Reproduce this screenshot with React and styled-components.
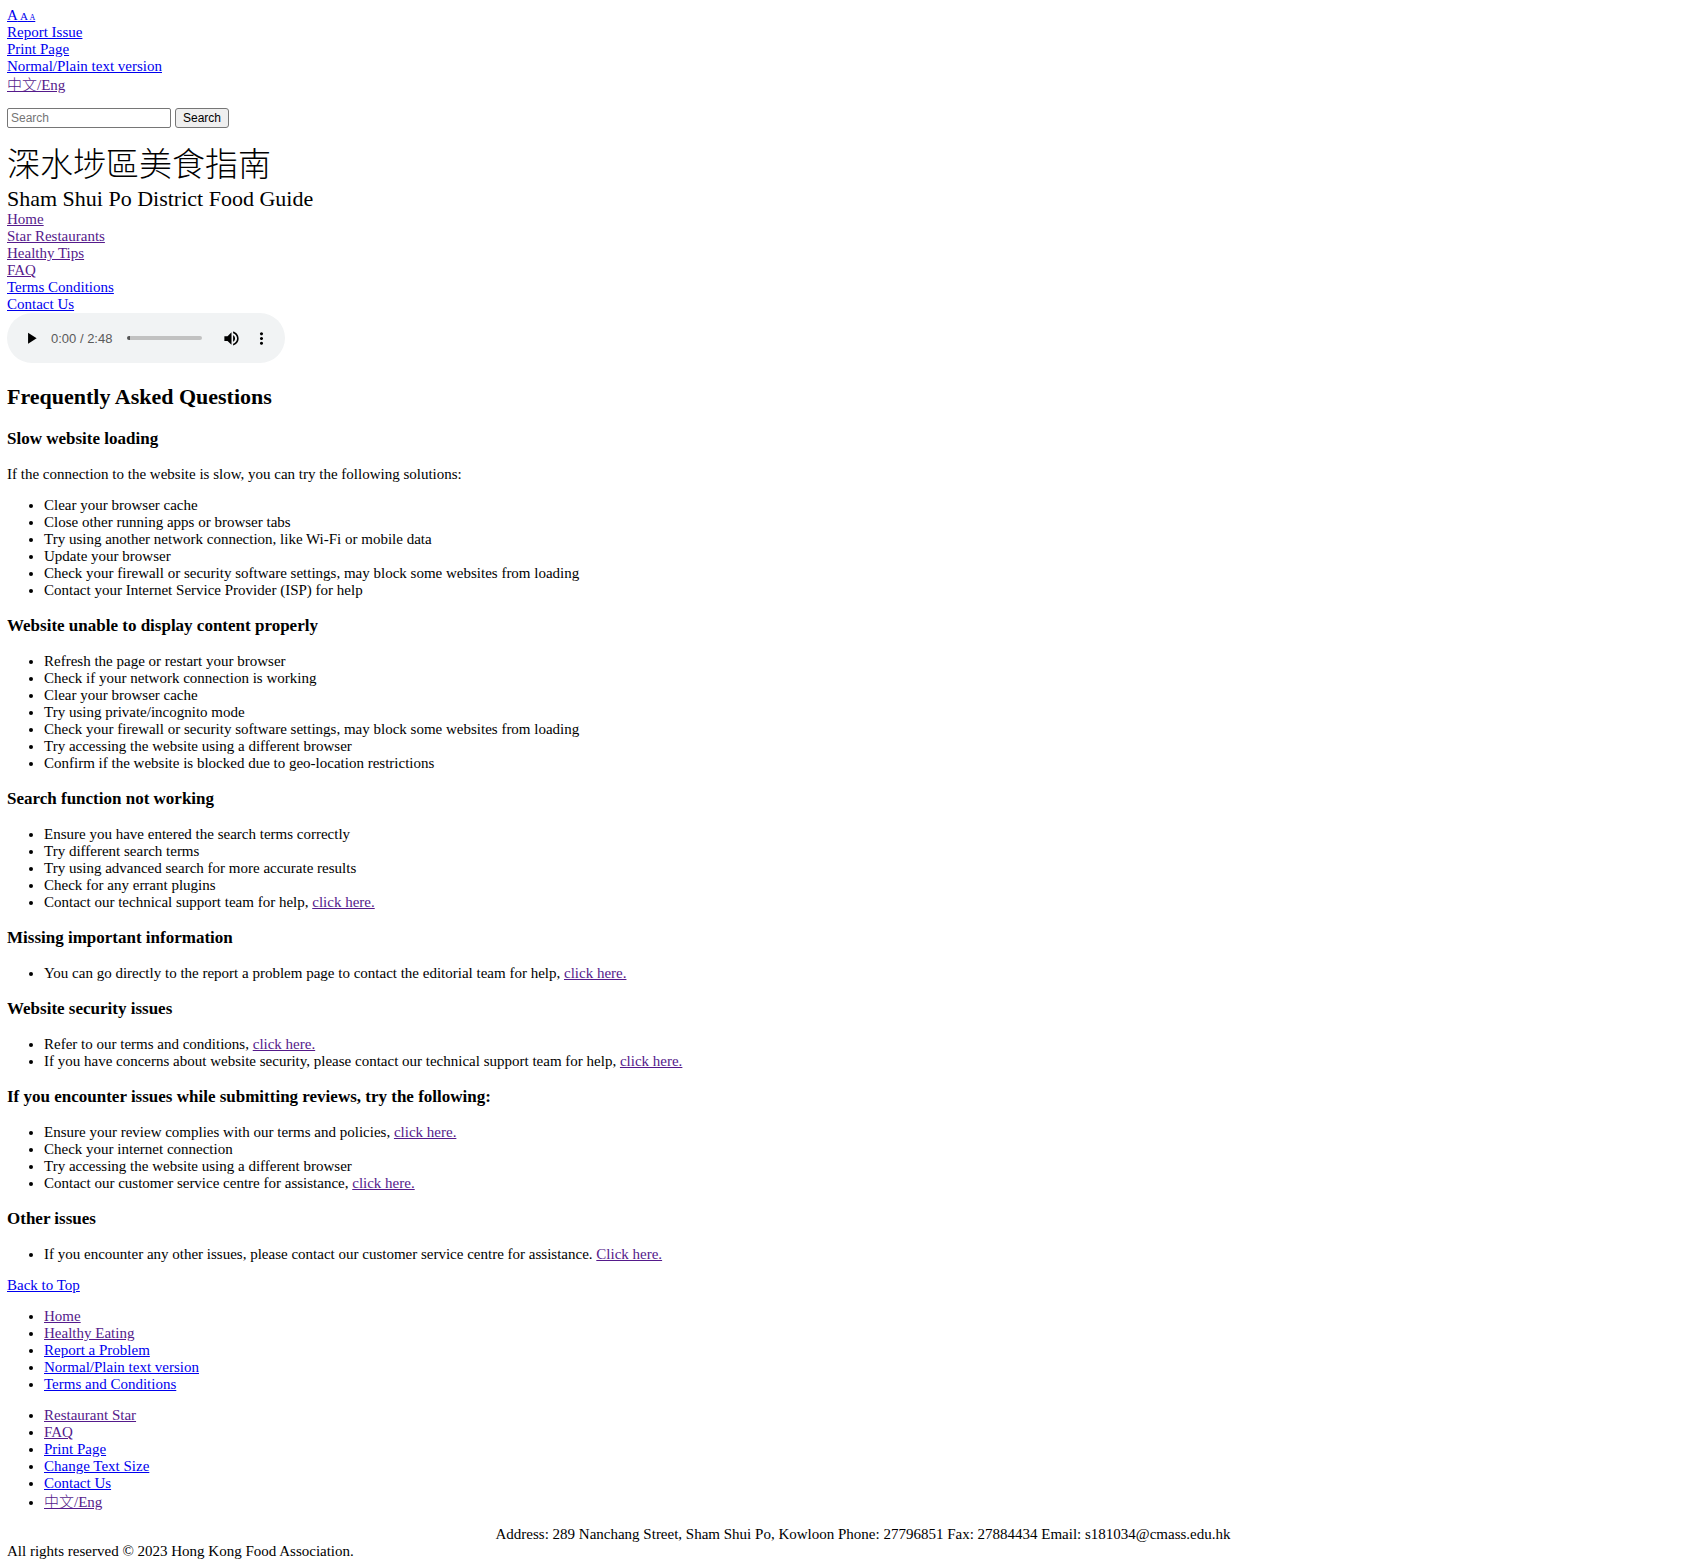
import React, { useState } from "react";
import styled, { createGlobalStyle } from "styled-components";

const serif = `"Liberation Serif", "Noto Sans CJK TC", serif`;
const sans = `"Liberation Sans", Arial, sans-serif`;

const GlobalStyle = createGlobalStyle`
  body {
    margin: 7px;
    background: #fff;
    color: #000;
    font: 15px/17px ${serif};
  }
`;

const Link = styled.a`
  color: ${(p) => (p.$visited ? "#551a8b" : "#0000ee")};
  text-decoration: underline;
`;

const LinkColumn = styled.nav`
  display: flex;
  flex-direction: column;
  align-items: flex-start;
`;

const LanguageLink = styled(Link)`
  display: inline-block;
  line-height: 20px;
  font-weight: 300;
`;

const Letter = styled.span`
  font-size: ${(p) => p.$size}px;
  line-height: 1;
`;

const SearchForm = styled.form`
  display: flex;
  gap: 4px;
  margin: 13px 0 16px;
`;

const SearchInput = styled.input`
  box-sizing: border-box;
  width: 164px;
  height: 20px;
  padding: 1px 3px;
  border: 1px solid #767676;
  border-radius: 2px;
  font: 12px ${sans};
  &::placeholder {
    color: #757575;
  }
`;

const SearchButton = styled.button`
  box-sizing: border-box;
  height: 20px;
  padding: 0 7px;
  border: 1px solid #767676;
  border-radius: 3px;
  background: #efefef;
  color: #000;
  font: 12px ${sans};
`;

const SiteTitle = styled.div`
  font-size: 33px;
  line-height: 42px;
  font-weight: 300;
`;

const SiteSubtitle = styled.div`
  font-size: 22px;
  line-height: 25px;
`;

const Player = styled.div`
  display: flex;
  align-items: center;
  box-sizing: border-box;
  width: 278px;
  height: 50px;
  padding: 0 9px;
  border-radius: 25px;
  background: #f1f3f4;
`;

const IconButton = styled.button`
  display: flex;
  align-items: center;
  justify-content: center;
  width: 30px;
  height: 30px;
  padding: 0;
  border: 0;
  background: none;
  color: #000;
`;

const Time = styled.span`
  flex: 1;
  margin-left: 5px;
  color: #5a5a5a;
  font: 13px/17px ${sans};
  white-space: nowrap;
`;

const Seek = styled.input`
  appearance: none;
  width: 75px;
  height: 4px;
  margin: 0 14px 0 0;
  border-radius: 2px;
  background: linear-gradient(to right, #555 3px, #c1c1c1 3px);
  &::-webkit-slider-thumb {
    appearance: none;
    width: 1px;
    height: 4px;
  }
`;

const PageTitle = styled.h2`
  margin: 21px 0 20px;
  font-size: 22px;
  line-height: 25px;
`;

const SectionTitle = styled.h3`
  margin: 17px 0 18px;
  font-size: 17px;
  line-height: 19px;
`;

const Paragraph = styled.p`
  margin: 14px 0;
`;

const List = styled.ul`
  margin: 14px 0;
  padding-left: 37px;
`;

const Address = styled.div`
  padding-left: 18px;
  text-align: center;
`;

const sections = [
  {
    title: "Slow website loading",
    intro: "If the connection to the website is slow, you can try the following solutions:",
    items: [
      ["Clear your browser cache"],
      ["Close other running apps or browser tabs"],
      ["Try using another network connection, like Wi-Fi or mobile data"],
      ["Update your browser"],
      ["Check your firewall or security software settings, may block some websites from loading"],
      ["Contact your Internet Service Provider (ISP) for help"],
    ],
  },
  {
    title: "Website unable to display content properly",
    items: [
      ["Refresh the page or restart your browser"],
      ["Check if your network connection is working"],
      ["Clear your browser cache"],
      ["Try using private/incognito mode"],
      ["Check your firewall or security software settings, may block some websites from loading"],
      ["Try accessing the website using a different browser"],
      ["Confirm if the website is blocked due to geo-location restrictions"],
    ],
  },
  {
    title: "Search function not working",
    items: [
      ["Ensure you have entered the search terms correctly"],
      ["Try different search terms"],
      ["Try using advanced search for more accurate results"],
      ["Check for any errant plugins"],
      ["Contact our technical support team for help,", "click here."],
    ],
  },
  {
    title: "Missing important information",
    items: [
      ["You can go directly to the report a problem page to contact the editorial team for help,", "click here."],
    ],
  },
  {
    title: "Website security issues",
    items: [
      ["Refer to our terms and conditions,", "click here."],
      ["If you have concerns about website security, please contact our technical support team for help,", "click here."],
    ],
  },
  {
    title: "If you encounter issues while submitting reviews, try the following:",
    items: [
      ["Ensure your review complies with our terms and policies,", "click here."],
      ["Check your internet connection"],
      ["Try accessing the website using a different browser"],
      ["Contact our customer service centre for assistance,", "click here."],
    ],
  },
  {
    title: "Other issues",
    items: [
      ["If you encounter any other issues, please contact our customer service centre for assistance.", "Click here."],
    ],
  },
];

const mainLinks = [
  ["Home", true],
  ["Star Restaurants", true],
  ["Healthy Tips", true],
  ["FAQ", true],
  ["Terms Conditions", false],
  ["Contact Us", false],
];

const footerLinks = [
  [
    ["Home", true],
    ["Healthy Eating", true],
    ["Report a Problem", false],
    ["Normal/Plain text version", false],
    ["Terms and Conditions", false],
  ],
  [
    ["Restaurant Star", true],
    ["FAQ", true],
    ["Print Page", false],
    ["Change Text Size", false],
    ["Contact Us", false],
  ],
];

function AudioPlayer() {
  const [position, setPosition] = useState(0);
  return (
    <Player role="group" aria-label="Audio player">
      <IconButton type="button" aria-label="Play">
        <svg width="22" height="22" viewBox="0 0 24 24" fill="currentColor">
          <path d="M8 5v14l11-7z" transform="translate(2 2) scale(.85)" />
        </svg>
      </IconButton>
      <Time>0:00 / 2:48</Time>
      <Seek
        type="range"
        aria-label="Seek"
        min="0"
        max="168"
        value={position}
        onChange={(e) => setPosition(Number(e.target.value))}
      />
      <IconButton type="button" aria-label="Mute">
        <svg width="19" height="19" viewBox="0 0 24 24" fill="currentColor">
          <path d="M3 9v6h4l5 5V4L7 9H3zm13.5 3c0-1.77-1.02-3.29-2.5-4.03v8.05c1.48-.73 2.5-2.25 2.5-4.02zM14 3.23v2.06c2.89.86 5 3.54 5 6.71s-2.11 5.85-5 6.71v2.06c4.01-.91 7-4.49 7-8.77s-2.99-7.86-7-8.77z" />
        </svg>
      </IconButton>
      <IconButton type="button" aria-label="More options">
        <svg width="19" height="19" viewBox="0 0 24 24" fill="currentColor">
          <path d="M12 8c1.1 0 2-.9 2-2s-.9-2-2-2-2 .9-2 2 .9 2 2 2zm0 2c-1.1 0-2 .9-2 2s.9 2 2 2 2-.9 2-2-.9-2-2-2zm0 6c-1.1 0-2 .9-2 2s.9 2 2 2 2-.9 2-2-.9-2-2-2z" />
        </svg>
      </IconButton>
    </Player>
  );
}

function Section({ title, intro, items }) {
  return (
    <section>
      <SectionTitle>{title}</SectionTitle>
      {intro && <Paragraph>{intro}</Paragraph>}
      <List>
        {items.map(([text, link]) => (
          <li key={text}>
            {text}
            {link && (
              <>
                {" "}
                <Link href="#" $visited>{link}</Link>
              </>
            )}
          </li>
        ))}
      </List>
    </section>
  );
}

export default function App() {
  return (
    <>
      <GlobalStyle />
      <header id="top">
        <LinkColumn aria-label="Tools">
          <Link href="#">
            <Letter $size={15}>A</Letter>
            <Letter $size={11}> A</Letter>
            <Letter $size={8}> A</Letter>
          </Link>
          <Link href="#">Report Issue</Link>
          <Link href="#">Print Page</Link>
          <Link href="#">Normal/Plain text version</Link>
          <LanguageLink href="#" $visited>中文/Eng</LanguageLink>
        </LinkColumn>
        <SearchForm role="search" onSubmit={(e) => e.preventDefault()}>
          <SearchInput type="text" placeholder="Search" aria-label="Search" />
          <SearchButton type="submit">Search</SearchButton>
        </SearchForm>
        <SiteTitle lang="zh-Hant">深水埗區美食指南</SiteTitle>
        <SiteSubtitle>Sham Shui Po District Food Guide</SiteSubtitle>
        <LinkColumn aria-label="Main">
          {mainLinks.map(([label, visited]) => (
            <Link key={label} href="#" $visited={visited}>{label}</Link>
          ))}
        </LinkColumn>
        <AudioPlayer />
      </header>
      <main>
        <PageTitle>Frequently Asked Questions</PageTitle>
        {sections.map((s) => (
          <Section key={s.title} {...s} />
        ))}
      </main>
      <footer>
        <Link href="#top">Back to Top</Link>
        {footerLinks.map((group, i) => (
          <List key={i}>
            {group.map(([label, visited]) => (
              <li key={label}>
                <Link href="#" $visited={visited}>{label}</Link>
              </li>
            ))}
            {i === 1 && (
              <li>
                <LanguageLink href="#" $visited>中文/Eng</LanguageLink>
              </li>
            )}
          </List>
        ))}
        <Address>
          Address: 289 Nanchang Street, Sham Shui Po, Kowloon Phone: 27796851 Fax: 27884434 Email: s181034@cmass.edu.hk
        </Address>
        <div>All rights reserved © 2023 Hong Kong Food Association.</div>
      </footer>
    </>
  );
}
